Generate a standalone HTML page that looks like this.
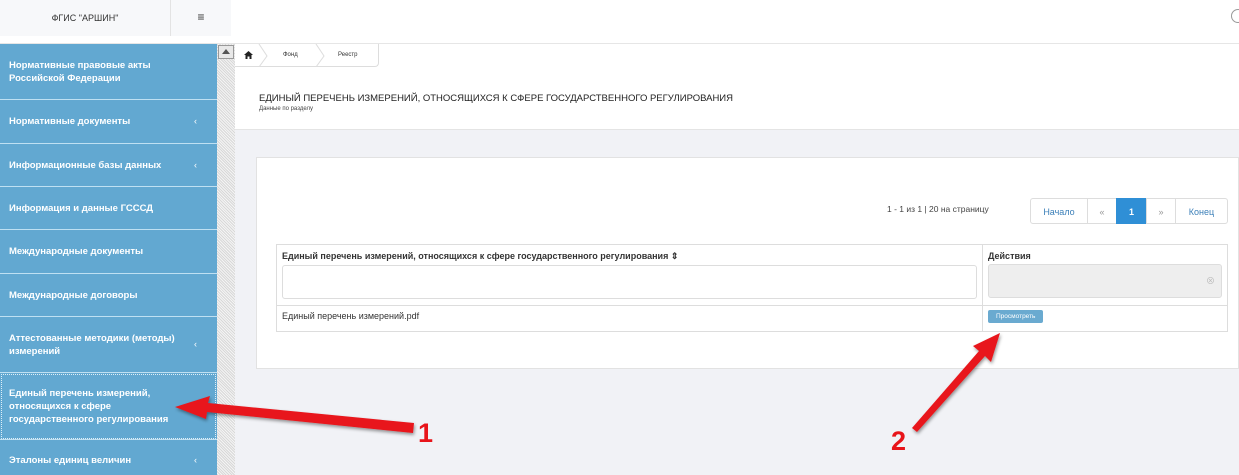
<!DOCTYPE html>
<html><head><meta charset="utf-8"><style>
*{box-sizing:border-box;margin:0;padding:0}
html,body{width:1239px;height:475px;overflow:hidden}
body{background:#f1f2f6;font-family:"Liberation Sans","Noto Sans CJK SC",sans-serif;position:relative;color:#333}
.abs{position:absolute}
#top{left:0;top:0;width:1239px;height:44px;background:#fff;border-bottom:1px solid #e6e6e6}
#brand{left:0;top:0;width:170px;height:36px;background:#f7f8fa;font-size:9px;text-align:center;line-height:36px;color:#333}
#burg{left:170px;top:0;width:61px;height:36px;background:#f7f8fa;border-left:1px solid #e3e3e3;text-align:center;line-height:34px;font-size:12px}
#side{left:0;top:44px;width:217px;height:431px;background:#62a8d1}
.it{position:absolute;left:0;width:217px;border-bottom:1px solid #bfe0f2;color:#fff;font-weight:bold;font-size:9.5px;padding-left:9px;display:flex;align-items:center;line-height:13px}
.it span.c{position:absolute;right:20px;font-weight:normal;font-size:9px}
#scroll{left:217px;top:44px;width:18px;height:431px;background:repeating-linear-gradient(45deg,#d8d8d8 0 1px,#f4f4f4 1px 2px)}
#sbtn{left:218px;top:45px;width:16px;height:14px;background:#e8e8e8;border:1px solid #999}
#head{left:235px;top:44px;width:1004px;height:86px;background:#fff;border-bottom:1px solid #e4e4e4}
#crumb{left:235px;top:44px;width:144px;height:23px;background:#fff;border:1px solid #ddd;border-top:none;border-left:none;border-radius:0 0 4px 0;font-size:6px}
#panel{left:256px;top:157px;width:983px;height:212px;background:#fff;border:1px solid #e2e2e2}
table{position:absolute;left:276px;top:244px;width:952px;border-collapse:collapse;font-size:9px;table-layout:fixed}
td{border:1px solid #ddd;vertical-align:top;overflow:hidden}
.pg{position:absolute;top:198px;height:26px;border:1px solid #ddd;font-size:9px;color:#3b7fb8;text-align:center;line-height:26px}
</style></head><body>
<div id="top" class="abs"></div>
<div id="brand" class="abs">ФГИС "АРШИН"</div>
<div id="burg" class="abs">≡</div>
<div class="abs" style="left:1231px;top:9px;width:14px;height:14px;border:1px solid #999;border-radius:50%"></div>
<div id="side" class="abs">
<div class="it" style="top:0;height:56px">Нормативные правовые акты<br>Российской Федерации</div>
<div class="it" style="top:56px;height:44px">Нормативные документы<span class="c">‹</span></div>
<div class="it" style="top:100px;height:43px">Информационные базы данных<span class="c">‹</span></div>
<div class="it" style="top:143px;height:43px">Информация и данные ГСССД</div>
<div class="it" style="top:186px;height:44px">Международные документы</div>
<div class="it" style="top:230px;height:43px">Международные договоры</div>
<div class="it" style="top:273px;height:56px">Аттестованные методики (методы)<br>измерений<span class="c">‹</span></div>
<div class="it" style="top:329px;height:67px;outline:1px dotted #dfeff8;outline-offset:-2px">Единый перечень измерений,<br>относящихся к сфере<br>государственного регулирования</div>
<div class="it" style="top:396px;height:40px;border:none">Эталоны единиц величин<span class="c">‹</span></div>
</div>
<div id="scroll" class="abs"></div>
<div id="sbtn" class="abs"><div style="margin:3px auto 0;width:0;height:0;border-left:4px solid transparent;border-right:4px solid transparent;border-bottom:5px solid #555"></div></div>
<div id="head" class="abs"></div>
<div id="crumb" class="abs">
<svg class="abs" style="left:9px;top:7px" width="9" height="8"><path d="M4.5 0 L9 4 L7.5 4 L7.5 8 L5.5 8 L5.5 5.5 L3.5 5.5 L3.5 8 L1.5 8 L1.5 4 L0 4 Z" fill="#222"/></svg>
<span class="abs" style="left:48px;top:8px">Фонд</span>
<span class="abs" style="left:103px;top:8px">Реестр</span>
<svg class="abs" style="left:0;top:0" width="144" height="23"><path d="M24 0 L32 12 L24 23 M81 0 L89 12 L81 23" stroke="#ddd" fill="none"/></svg>
</div>
<div class="abs" style="left:259px;top:93px;font-size:9.5px;color:#222">ЕДИНЫЙ ПЕРЕЧЕНЬ ИЗМЕРЕНИЙ, ОТНОСЯЩИХСЯ К СФЕРЕ ГОСУДАРСТВЕННОГО РЕГУЛИРОВАНИЯ</div>
<div class="abs" style="left:259px;top:106px;font-size:6px;color:#444">Данные по разделу</div>
<div id="panel" class="abs"></div>
<div class="abs" style="left:887px;top:204px;font-size:8.5px;color:#444">1 - 1 из 1 | 20 на страницу</div>
<div class="pg" style="left:1030px;width:58px;border-radius:3px 0 0 3px">Начало</div>
<div class="pg" style="left:1087px;width:30px;color:#999">«</div>
<div class="pg" style="left:1116px;width:31px;background:#2f8fd6;border-color:#2f8fd6;color:#fff;font-weight:bold">1</div>
<div class="pg" style="left:1146px;width:30px;color:#999">»</div>
<div class="pg" style="left:1175px;width:53px;border-radius:0 3px 3px 0">Конец</div>
<table>
<tr><td style="width:706px;height:58px;padding:6px 5px"><b>Единый перечень измерений, относящихся к сфере государственного регулирования ⇕</b><div style="margin-top:3px;height:34px;border:1px solid #ddd;border-radius:3px"></div></td>
<td style="height:58px;padding:6px 5px"><b>Действия</b><div style="margin-top:3px;height:34px;background:#eee;border:1px solid #ddd;border-radius:3px;text-align:right;padding:9px 6px;color:#bbb">⊗</div></td></tr>
<tr><td style="height:26px;padding:5px 5px">Единый перечень измерений.pdf</td>
<td style="height:26px;padding:4px 5px"><span style="display:inline-block;background:#6aaad0;color:#fff;font-size:6.5px;padding:3px 8px;border-radius:2px">Просмотреть</span></td></tr>
</table>
<svg class="abs" style="left:0;top:0" width="1239" height="475">
<defs><filter id="sh"><feDropShadow dx="1" dy="2" stdDeviation="1.5" flood-opacity=".4"/></filter></defs>
<g fill="#e8141a" filter="url(#sh)">
<polygon points="175,407 210,396 208,403 414,423 413,433 207,412 206,419"/>
<polygon points="1000,333 991,362 985,356 917,432 912,428 979,351 973,346"/>
</g>
<text x="418" y="442" font-family="Liberation Sans" font-weight="bold" font-size="27" fill="#e8141a">1</text>
<text x="891" y="450" font-family="Liberation Sans" font-weight="bold" font-size="27" fill="#e8141a">2</text>
</svg>
</body></html>
